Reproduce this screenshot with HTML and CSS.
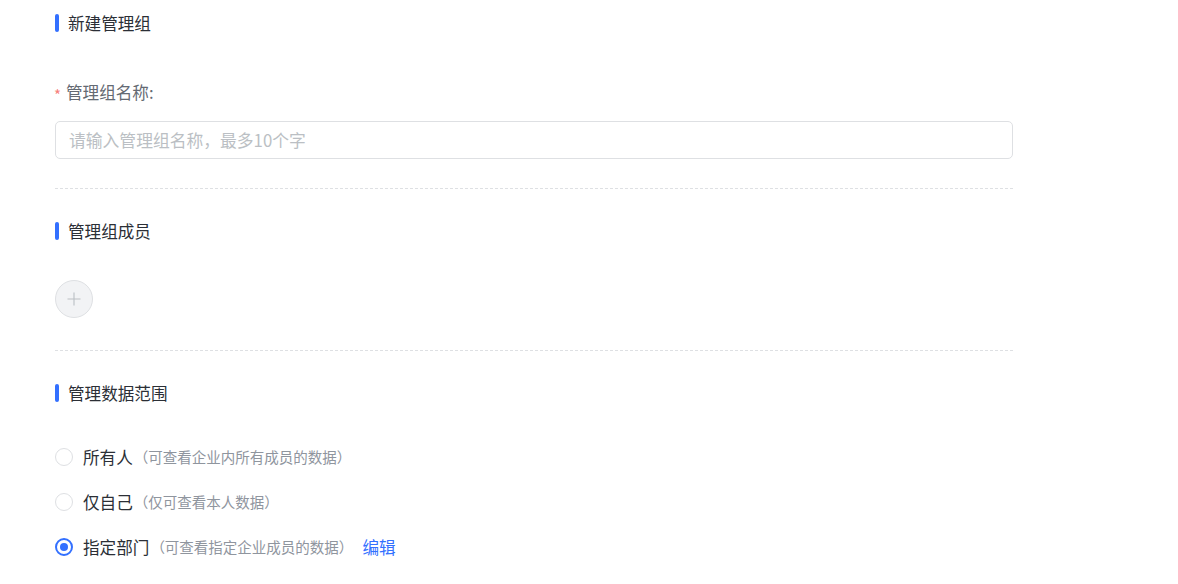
FILE: index.html
```html
<!DOCTYPE html>
<html lang="zh-CN">
<head>
  <meta charset="UTF-8" />
  <title>新建管理组</title>
  <link rel="stylesheet" href="styles.css">
</head>
<body>
  <div class="page">
    <div class="block">
      <h2 class="block-title"><span class="bar"></span>新建管理组</h2>
      <label class="field-label" for="groupName"><span class="req">*</span>管理组名称:</label>
      <input type="text" id="groupName" class="text-input" placeholder="请输入管理组名称，最多10个字" />
    </div>

    <div class="divider"></div>

    <div class="block members">
      <h2 class="block-title"><span class="bar"></span>管理组成员</h2>
      <button class="add-btn" type="button" aria-label="添加成员">
        <svg width="14" height="14" viewBox="0 0 14 14">
          <path d="M7 0.5v13M0.5 7h13" stroke="#bbbfc4" stroke-width="1.1" fill="none" />
        </svg>
      </button>
    </div>

    <div class="divider"></div>

    <div class="block">
      <h2 class="block-title"><span class="bar"></span>管理数据范围</h2>
      <ul class="radio-list">
        <li class="radio-row">
          <span class="radio"></span>
          <span class="radio-label">所有人</span>
          <span class="hint">（可查看企业内所有成员的数据）</span>
        </li>
        <li class="radio-row">
          <span class="radio"></span>
          <span class="radio-label">仅自己</span>
          <span class="hint">（仅可查看本人数据）</span>
        </li>
        <li class="radio-row">
          <span class="radio checked"></span>
          <span class="radio-label">指定部门</span>
          <span class="hint">（可查看指定企业成员的数据）</span>
          <a class="edit-link" href="#">编辑</a>
        </li>
      </ul>
    </div>
  </div>
</body>
</html>
```

FILE: styles.css
```css
:root {
  --blue: #3370ff;
  --text: #2b2f36;
  --text-2: #646a73;
  --text-3: #8f959e;
  --line: #dee0e3;
  font-family: "Noto Sans CJK SC", "Noto Sans", sans-serif;
}

* {
  box-sizing: border-box;
  margin: 0;
  padding: 0;
}

body {
  background: #fff;
  color: var(--text);
}

.page {
  width: 1013px;
  padding: 11px 0 0 55px;
}

.block-title {
  display: flex;
  align-items: center;
  gap: 10px;
  font-size: 16.6px;
  font-weight: 400;
  line-height: 24px;
  color: var(--text);
}

.bar {
  width: 4px;
  height: 18px;
  border-radius: 2px;
  background: var(--blue);
  margin-right: -1px;
}

.field-label {
  display: flex;
  align-items: center;
  height: 24px;
  margin-top: 45px;
  font-size: 16.6px;
  line-height: 24px;
  color: var(--text-2);
}

.req {
  color: #f7807b;
  font-size: 15px;
  line-height: 14px;
  width: 12px;
  margin-left: -1px;
  padding-top: 6px;
}

.text-input {
  display: block;
  width: 100%;
  height: 38px;
  margin-top: 17px;
  padding: 0 13px;
  font-family: inherit;
  font-size: 16.8px;
  color: var(--text);
  border: 1px solid var(--line);
  border-radius: 5px;
  outline: none;
}

.text-input::placeholder {
  color: #bbbfc4;
}

.divider {
  border-top: 1px dashed var(--line);
  margin: 29px 0 30px;
}

.members + .divider {
  margin-top: 32px;
}

.add-btn {
  display: flex;
  align-items: center;
  justify-content: center;
  width: 38px;
  height: 38px;
  margin-top: 37px;
  border-radius: 50%;
  border: 1px solid var(--line);
  background: #f2f3f5;
  cursor: pointer;
}

.radio-list {
  list-style: none;
  margin-top: 40px;
  display: grid;
  gap: 21px;
}

.radio-row {
  display: flex;
  align-items: center;
  height: 24px;
}

.radio {
  width: 18px;
  height: 18px;
  border-radius: 50%;
  border: 1px solid var(--line);
  margin-right: 10px;
  flex-shrink: 0;
}

.radio.checked {
  border: 2px solid var(--blue);
  display: flex;
  align-items: center;
  justify-content: center;
}

.radio.checked::after {
  content: "";
  width: 8px;
  height: 8px;
  border-radius: 50%;
  background: var(--blue);
}

.radio-label {
  font-size: 16.6px;
  line-height: 24px;
  color: var(--text);
}

.hint {
  font-size: 14.5px;
  line-height: 24px;
  color: var(--text-3);
  margin-left: 1px;
}

.edit-link {
  margin-left: 9px;
  font-size: 16.6px;
  line-height: 24px;
  color: var(--blue);
  text-decoration: none;
}
```
